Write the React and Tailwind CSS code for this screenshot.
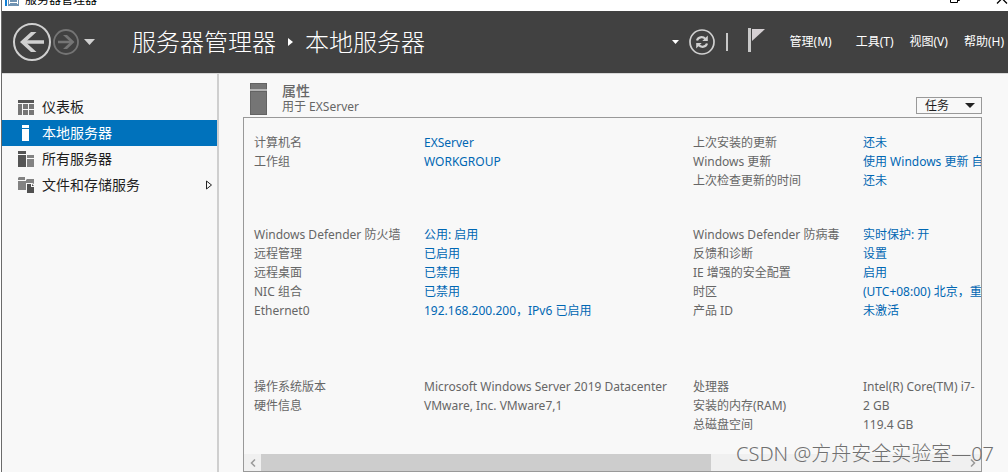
import React from 'react';

const NAV = [
  { label: '仪表板', icon: DashboardIcon },
  { label: '本地服务器', icon: ServerIcon, active: true },
  { label: '所有服务器', icon: ServersIcon },
  { label: '文件和存储服务', icon: StorageIcon, expandable: true },
];

const MENUS = ['工具(T)', '视图(V)', '帮助(H)'];

const LEFT_GROUPS = [
  [
    { label: '计算机名', value: 'EXServer', link: true },
    { label: '工作组', value: 'WORKGROUP', link: true },
  ],
  [
    { label: 'Windows Defender 防火墙', value: '公用: 启用', link: true },
    { label: '远程管理', value: '已启用', link: true },
    { label: '远程桌面', value: '已禁用', link: true },
    { label: 'NIC 组合', value: '已禁用', link: true },
    { label: 'Ethernet0', value: '192.168.200.200，IPv6 已启用', link: true },
  ],
  [
    { label: '操作系统版本', value: 'Microsoft Windows Server 2019 Datacenter' },
    { label: '硬件信息', value: 'VMware, Inc. VMware7,1' },
  ],
];

const RIGHT_GROUPS = [
  [
    { label: '上次安装的更新', value: '还未', link: true },
    { label: 'Windows 更新', value: '使用 Windows 更新 自', link: true },
    { label: '上次检查更新的时间', value: '还未', link: true },
  ],
  [
    { label: 'Windows Defender 防病毒', value: '实时保护: 开', link: true },
    { label: '反馈和诊断', value: '设置', link: true },
    { label: 'IE 增强的安全配置', value: '启用', link: true },
    { label: '时区', value: '(UTC+08:00) 北京，重', link: true },
    { label: '产品 ID', value: '未激活', link: true },
  ],
  [
    { label: '处理器', value: 'Intel(R) Core(TM) i7-' },
    { label: '安装的内存(RAM)', value: '2 GB' },
    { label: '总磁盘空间', value: '119.4 GB' },
  ],
];

function DashboardIcon() {
  return (
    <svg width="16" height="15" viewBox="0 0 16 15" shapeRendering="crispEdges">
      <path d="M0 0h16v3H0z" fill="#555" />
      <path d="M0 4h4v11H0zM5 4h5v5H5zM11 4h5v5h-5zM5 10h5v5H5zM11 10h5v5h-5z" fill="#777" />
    </svg>
  );
}

function ServerIcon() {
  return (
    <svg width="16" height="16" viewBox="0 0 16 16" shapeRendering="crispEdges">
      <path d="M4 0h7v3H4zM4 4h7v12H4z" fill="#fff" />
    </svg>
  );
}

function ServersIcon() {
  return (
    <svg width="16" height="16" viewBox="0 0 16 16" shapeRendering="crispEdges">
      <path d="M0 0h8v3H0zM0 4h8v12H0z" fill="#555" />
      <path d="M9 4h7v3H9zM9 8h7v8H9z" fill="#828282" />
    </svg>
  );
}

function StorageIcon() {
  return (
    <svg width="16" height="16" viewBox="0 0 16 16">
      <path d="M1 0h6v3H0V1zM0 4h7v9H0zM8 3l1-1h7v5l-2-1H8v7H7V4h1z" fill="#828282" />
      <path d="M9 7h4v3h3v6H9z" fill="#505050" />
      <path d="M14 7l2 2h-2z" fill="#505050" />
    </svg>
  );
}

function TitleBar() {
  return (
    <div className="flex h-[11px] items-end justify-between overflow-hidden bg-white">
      <div className="flex items-end">
        <svg className="ml-[3px]" width="14" height="11" viewBox="0 0 14 11" shapeRendering="crispEdges">
          <path d="M0 0h2v6H0z" fill="#0f7fd6" />
          <path d="M3 0h11v6H3z" fill="#6f93b3" />
          <path d="M4 0h1v4H4zM12 0h1v4h-1zM5 2h7v1H5z" fill="#fff" />
        </svg>
        <span className="mb-[3px] ml-[6px] text-xs leading-4 text-black">服务器管理器</span>
      </div>
      <svg width="60" height="11" viewBox="0 0 60 11" fill="none" stroke="#000">
        <path d="M2.500 0V2.500H9.500V0M9.500 .5H11.500V0" />
        <path d="M49 3.500L54 -1.500L59 3.500" strokeWidth="1.300" />
      </svg>
    </div>
  );
}

function Header() {
  return (
    <header className="flex h-[62px] items-center justify-between bg-[#414141] text-white">
      <div className="flex items-center">
        <button aria-label="后退" className="ml-[10px]">
          <svg width="40" height="40" viewBox="0 0 40 40" fill="none" stroke="#d0d0d0">
            <circle cx="20" cy="20" r="18" strokeWidth="2" />
            <path d="M32 20H11" strokeWidth="3.500" />
            <path d="M24.500 10H19L8 20L19 30H24.500L13.500 20Z" fill="#d0d0d0" stroke="none" />
          </svg>
        </button>
        <button aria-label="前进">
          <svg width="28" height="28" viewBox="0 0 28 28" fill="none" stroke="#757575">
            <circle cx="14" cy="14" r="12" strokeWidth="1.800" />
            <path d="M6 14H20" strokeWidth="2.500" />
            <path d="M11 7H15L22.500 14L15 21H11L18.500 14Z" fill="#757575" stroke="none" />
          </svg>
        </button>
        <button aria-label="历史记录" className="ml-1">
          <svg width="11" height="6" viewBox="0 0 11 6"><path d="M0 0h11L5.500 6z" fill="#d0d0d0" /></svg>
        </button>
        <h1 className="ml-9 flex items-center gap-3 pl-px text-2xl font-light whitespace-nowrap">
          <span>服务器管理器</span>
          <svg width="5" height="8" viewBox="0 0 5 8"><path d="M0 0L5 4L0 8z" fill="#fff" /></svg>
          <span>本地服务器</span>
        </h1>
      </div>
      <div className="flex items-center pr-1">
        <button aria-label="服务器列表">
          <svg width="7" height="4" viewBox="0 0 7 4"><path d="M0 0h7L3.500 4z" fill="#fff" /></svg>
        </button>
        <button aria-label="刷新" className="ml-[9px]">
          <svg width="28" height="28" viewBox="0 0 28 28" fill="none" stroke="#d0d0d0">
            <circle cx="14" cy="14" r="12" strokeWidth="1.700" />
            <path d="M9 12.500C10 9 14.500 8 17.500 11M19 15.500C18 19 13.500 20 10.500 17" strokeWidth="2.200" />
            <path d="M19.800 7.500V13H14.300zM8.200 20.500V15H13.700z" fill="#d0d0d0" stroke="none" />
          </svg>
        </button>
        <span className="ml-[10px] h-[18px] w-[2px] bg-[#c8c8c8]" />
        <button aria-label="通知" className="ml-5">
          <svg width="18" height="28" viewBox="0 0 18 28">
            <path d="M0 0h3v24H0z" fill="#c8c8c8" />
            <path d="M4 1h13L4 13z" fill="#d5d0d3" />
          </svg>
        </button>
        <nav className="ml-6 flex text-xs whitespace-nowrap">
          <button className="mr-6">管理(M)</button>
          <div className="flex gap-4">
            {MENUS.map((menu) => <button key={menu}>{menu}</button>)}
          </div>
        </nav>
      </div>
    </header>
  );
}

function Sidebar() {
  return (
    <nav className="w-[217px] shrink-0 border-r-2 border-[#cfcfcf] pt-5">
      {NAV.map(({ label, icon: Icon, active, expandable }) => (
        <a
          key={label}
          href="#"
          className={`flex h-[26px] items-center pr-1 pl-4 text-sm ${active ? 'bg-[#0072bc] text-white' : 'text-[#1e1e1e]'}`}
        >
          <Icon />
          <span className="ml-2">{label}</span>
          {expandable && (
            <svg className="ml-auto" width="8" height="10" viewBox="0 0 8 10" fill="none" stroke="#222">
              <path d="M1.500 1L6.500 5L1.500 9z" />
            </svg>
          )}
        </a>
      ))}
    </nav>
  );
}

function PropertyGroup({ rows }) {
  return (
    <dl className="grid auto-rows-[19px] grid-cols-[170px_1fr] leading-[19px]">
      {rows.map(({ label, value, link }) => (
        <React.Fragment key={label}>
          <dt>{label}</dt>
          <dd>{link ? <a href="#" className="text-[#0067b3]">{value}</a> : value}</dd>
        </React.Fragment>
      ))}
    </dl>
  );
}

function Properties() {
  return (
    <section className="border border-[#999]">
      <div className="overflow-hidden pt-[15px] pb-5 pl-[10px] text-xs whitespace-nowrap text-[#666]">
        <div className="grid grid-cols-[439px_1fr] gap-y-[35px]">
          <PropertyGroup rows={LEFT_GROUPS[0]} />
          <PropertyGroup rows={RIGHT_GROUPS[0]} />
          <PropertyGroup rows={LEFT_GROUPS[1]} />
          <PropertyGroup rows={RIGHT_GROUPS[1]} />
          <div className="pt-[22px]"><PropertyGroup rows={LEFT_GROUPS[2]} /></div>
          <div className="pt-[22px]"><PropertyGroup rows={RIGHT_GROUPS[2]} /></div>
        </div>
      </div>
      <div className="flex h-[17px] bg-[#f0f0f0]">
        <button aria-label="向左滚动" className="flex w-[17px] items-center justify-center">
          <svg width="6" height="8" viewBox="0 0 6 8" fill="none" stroke="#999" strokeWidth="1.500"><path d="M5 0.500L1.500 4L5 7.500" /></svg>
        </button>
        <div className="flex-1">
          <div className="h-full w-[64%] bg-[#cdcdcd]" />
        </div>
        <button aria-label="向右滚动" className="flex w-[17px] items-center justify-center">
          <svg width="6" height="8" viewBox="0 0 6 8" fill="none" stroke="#999" strokeWidth="1.500"><path d="M1 0.500L4.500 4L1 7.500" /></svg>
        </button>
      </div>
    </section>
  );
}

export default function App() {
  return (
    <div className="relative flex min-h-screen flex-col overflow-hidden border-l border-white bg-[#f8f8f8] font-['Noto_Sans','Noto_Sans_CJK_SC',sans-serif]">
      <div className="flex flex-1 flex-col border-l border-[#6b6b6b]">
        <TitleBar />
        <Header />
        <div className="flex flex-1 border-t border-[#d8d8d8]">
          <Sidebar />
          <main className="min-w-0 flex-1 pr-[26px] pl-6">
            <div className="flex h-[43px] items-end justify-between">
              <div className="flex items-end pl-[7px]">
                <svg className="mb-[2px]" width="17" height="32" viewBox="0 0 17 32" shapeRendering="crispEdges">
                  <path d="M0 0h17v32H0z" fill="#636363" />
                  <path d="M1 1h15v5H1zM1 9h15v22H1z" fill="#757575" />
                  <path d="M0 6h17v2H0z" fill="#b5b5b5" />
                </svg>
                <div className="ml-[15px] text-[#666]">
                  <h2 className="text-sm leading-4 font-medium">属性</h2>
                  <p className="pb-[2px] text-xs leading-4">用于 EXServer</p>
                </div>
              </div>
              <button className="mb-[3px] flex h-[17px] w-[66px] items-center justify-between border border-[#999] pr-[6px] pl-2 text-xs leading-[15px] text-[#1e1e1e]">
                任务
                <svg width="10" height="5" viewBox="0 0 10 5"><path d="M0 0h10L5 5z" fill="#222" /></svg>
              </button>
            </div>
            <Properties />
          </main>
        </div>
      </div>
      <p className="pointer-events-none absolute right-[14px] bottom-[6px] text-xl leading-6 font-light whitespace-nowrap text-[#707070]">
        CSDN @方舟安全实验室—07
      </p>
    </div>
  );
}
